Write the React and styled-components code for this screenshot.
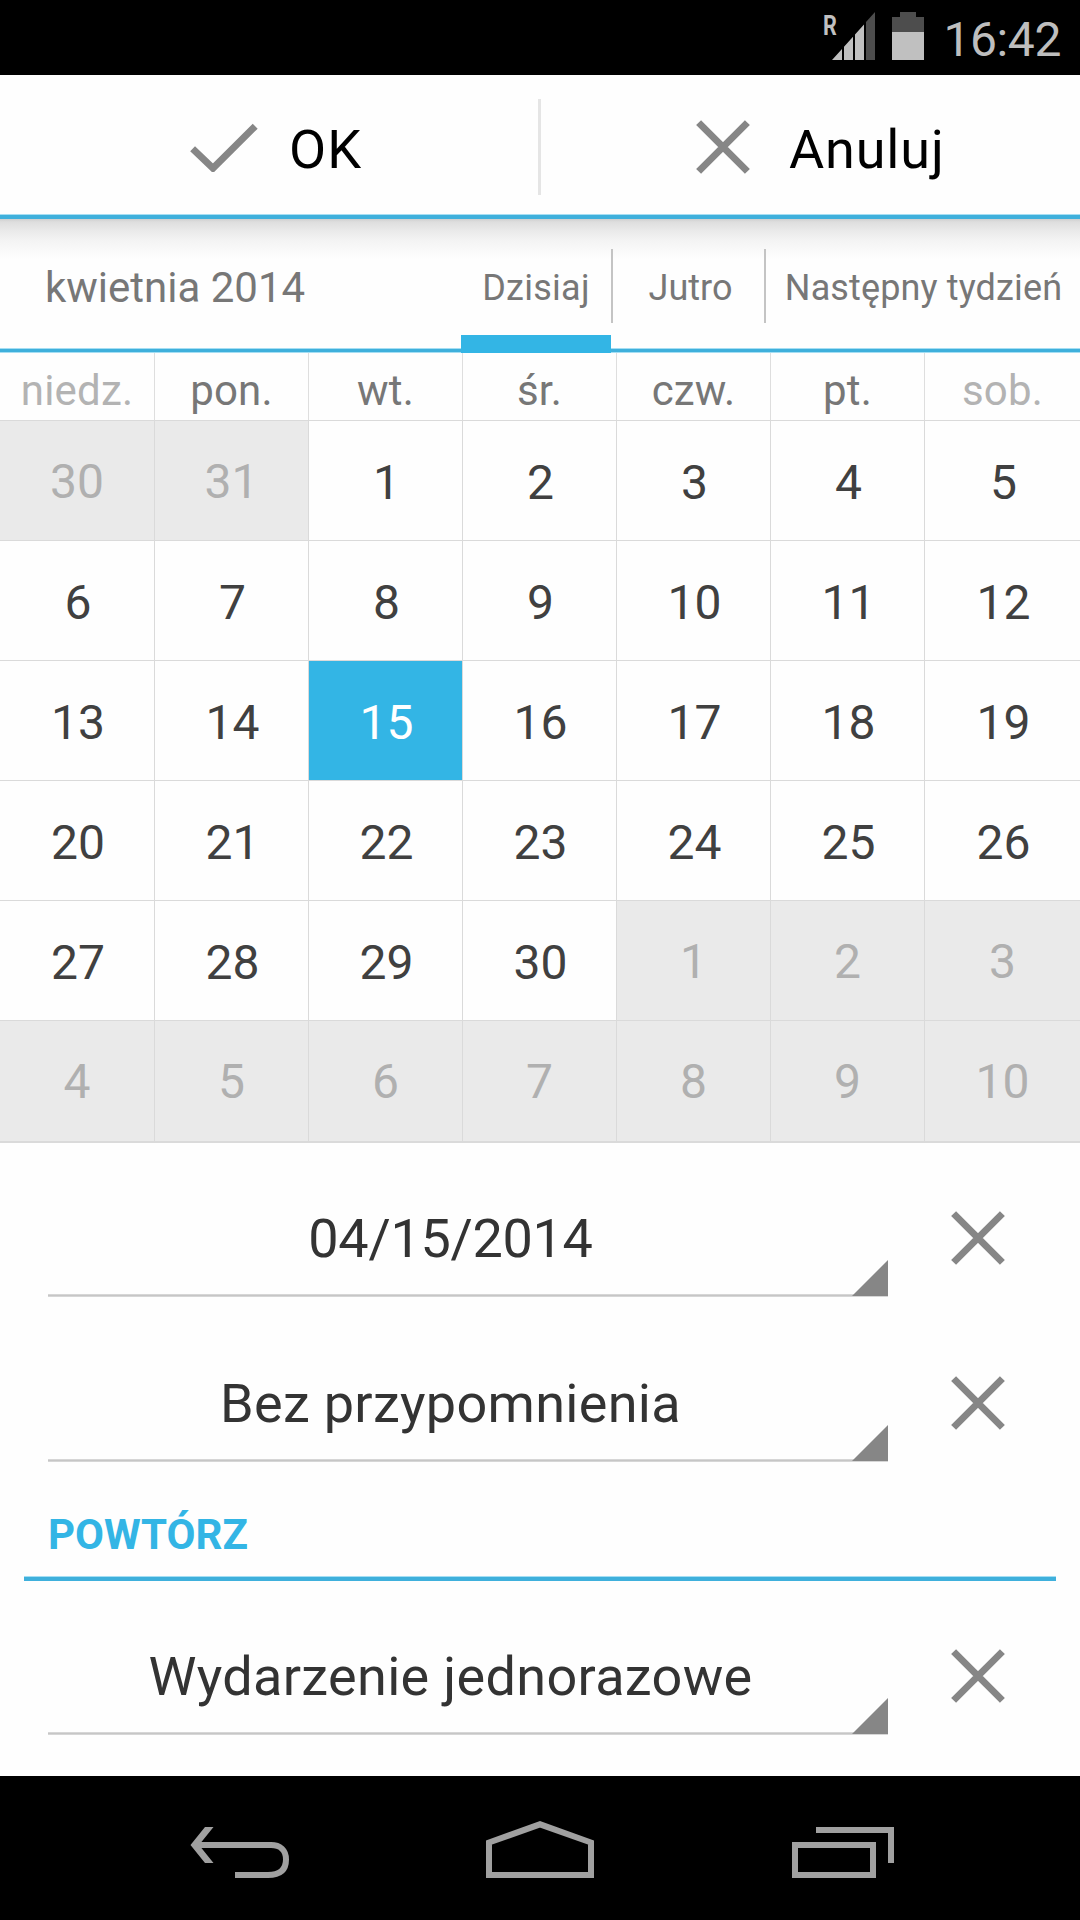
import { useState } from "react";
import styled, { createGlobalStyle } from "styled-components";

const weekdays = ["niedz.", "pon.", "wt.", "śr.", "czw.", "pt.", "sob."];

// prev month tail, april, next month head
const days = [
  ...[30, 31].map(d => ({ day: d, outside: true })),
  ...Array.from({ length: 30 }, (_, i) => ({ day: i + 1, outside: false })),
  ...Array.from({ length: 10 }, (_, i) => ({ day: i + 1, outside: true })),
];

function CloseIcon() {
  return (
    <svg width="54" height="54" viewBox="0 0 54 54">
      <path d="M2.6 2.6L51.4 51.4M51.4 2.6L2.6 51.4" stroke="#868686" strokeWidth="7" />
    </svg>
  );
}

function CheckIcon() {
  return (
    <svg width="68" height="50" viewBox="0 0 68 50">
      <path d="M2.6 26.8L23 46.2L65.2 4.2" fill="none" stroke="#868686" strokeWidth="7" />
    </svg>
  );
}

function SpinnerRow({ text, spacing }) {
  return (
    <FieldRow>
      <Spinner $spacing={spacing}>
        {text}
        <Corner />
      </Spinner>
      <ClearButton>
        <CloseIcon />
      </ClearButton>
    </FieldRow>
  );
}

export default function App() {
  const [selected, setSelected] = useState(15);

  return (
    <Screen>
      <GlobalStyle />
      <StatusBar>
        <Signal>
          <Roaming>R</Roaming>
          <svg width="43" height="48" viewBox="0 0 43 48">
            <path d="M34 9.9L43 0V48H34Z" fill="#4d4d4d" />
            <path d="M0 48L10 37V48ZM12 34.8L21 24.8V48H12ZM23 22.6L32 12.6V48H23Z" fill="#c0c0c0" />
          </svg>
        </Signal>
        <svg width="32" height="48" viewBox="0 0 32 48">
          <path d="M0 5H8V0H24V5H32V20H0Z" fill="#4d4d4d" />
          <path d="M0 20H32V48H0Z" fill="#c0c0c0" />
        </svg>
        <Clock>16:42</Clock>
      </StatusBar>

      <ActionBar>
        <ActionButton $left={190} $gap={31} $spacing="1px">
          <CheckIcon />
          <span>OK</span>
        </ActionButton>
        <ActionDivider />
        <ActionButton $left={155} $gap={39} $spacing="0.85px">
          <CloseIcon />
          <span>Anuluj</span>
        </ActionButton>
      </ActionBar>

      <Tabs>
        <Month>kwietnia 2014</Month>
        <Tab $width={150} $spacing="0.25px">
          Dzisiaj
          <Indicator />
        </Tab>
        <TabDivider />
        <Tab $width={151} $shift={4}>Jutro</Tab>
        <TabDivider />
        <Tab $width={314} $shift={1} $spacing="0.13px">Następny tydzień</Tab>
      </Tabs>

      <Calendar>
        {weekdays.map((name, i) => (
          <Weekday key={name} $weekend={i === 0 || i === 6}>
            {name}
          </Weekday>
        ))}
        {days.map(({ day, outside }, i) => (
          <Day
            key={i}
            $outside={outside}
            $selected={!outside && day === selected}
            onClick={() => !outside && setSelected(day)}
          >
            {day}
          </Day>
        ))}
      </Calendar>

      <Form>
        <SpinnerRow text="04/15/2014" spacing="-0.3px" />
        <SpinnerRow text="Bez przypomnienia" spacing="0.3px" />
        <SectionTitle>POWTÓRZ</SectionTitle>
        <SpinnerRow text="Wydarzenie jednorazowe" spacing="0.33px" />
      </Form>

      <NavBar>
        <NavButton>
          <svg width="108" height="72" viewBox="0 0 108 72">
            <path d="M6.5 33L21 15H29.5L15 33L29.5 51H21Z" fill="#a0a0a0" />
            <path d="M13 33H87C96 33 102 38 102 47.5S97 63 84 63H51" fill="none" stroke="#a0a0a0" strokeWidth="6" />
          </svg>
        </NavButton>
        <NavButton>
          <svg width="108" height="72" viewBox="0 0 108 72">
            <path d="M3 30.5L54 12.3L105 30.5V63H3Z" fill="none" stroke="#a0a0a0" strokeWidth="6" />
          </svg>
        </NavButton>
        <NavButton>
          <svg width="108" height="72" viewBox="0 0 108 72">
            <path d="M7 33H85V63H7ZM28 18H103V51" fill="none" stroke="#a0a0a0" strokeWidth="6" />
          </svg>
        </NavButton>
      </NavBar>
    </Screen>
  );
}

const GlobalStyle = createGlobalStyle`
  body {
    margin: 0;
    background: #fefefe;
    font-family: Roboto, sans-serif;
  }

  * {
    box-sizing: border-box;
  }

  svg {
    display: block;
    flex: none;
  }

  button {
    margin: 0;
    padding: 0;
    border: none;
    background: none;
    font: inherit;
    white-space: nowrap;
  }
`;

const Screen = styled.div`
  width: 1080px;
  height: 1920px;
  display: flex;
  flex-direction: column;
  overflow: hidden;

  > * {
    flex-shrink: 0;
  }
`;

// status bar
const StatusBar = styled.header`
  height: 75px;
  padding: 12px 19px 0 0;
  display: flex;
  justify-content: flex-end;
  background: #000;
`;

const Signal = styled.div`
  position: relative;
  margin-right: 17px;
`;

const Roaming = styled.span`
  position: absolute;
  left: -9px;
  top: -2px;
  font-size: 27px;
  font-weight: 700;
  line-height: 32px;
  color: #c0c0c0;
  transform: scaleX(0.8);
  transform-origin: left;
`;

const Clock = styled.div`
  margin-left: 19px;
  font-size: 48px;
  line-height: 55px;
  letter-spacing: -0.4px;
  color: #bebebe;
`;

// OK / cancel
const ActionBar = styled.div`
  height: 144px;
  display: flex;
  padding-bottom: 5px;
  background: linear-gradient(#a5def3 1px, #3fb0dc 1px) bottom / 100% 5px no-repeat #fefefe;
`;

const ActionButton = styled.button`
  width: 538px;
  display: flex;
  align-items: center;
  gap: ${p => p.$gap}px;
  && {
    padding: 5px 0 0 ${p => p.$left}px;
  }
  font-size: 54px;
  letter-spacing: ${p => p.$spacing};
  color: #000;

  span {
    padding-top: 5px;
  }
`;

const ActionDivider = styled.div`
  width: 3px;
  height: 96px;
  margin-top: 24px;
  background: #e5e5e5;
`;

// month + shortcuts
const Tabs = styled.div`
  height: 134px;
  padding: 8px 0 5px;
  display: flex;
  background:
    linear-gradient(#a5def3 1px, #3fb0dc 1px 4px, #a5def3 4px) bottom / 100% 5px no-repeat,
    linear-gradient(#cfcfcf 0, #dedede 3px, #eaeaea 12px, #f4f4f4 22px, #fefefe 40px);
`;

const Month = styled.div`
  flex: 1;
  padding-left: 45px;
  font-size: 42px;
  line-height: 121px;
  color: #777;
`;

const Tab = styled.button`
  position: relative;
  width: ${p => p.$width}px;
  && {
    padding-left: ${p => p.$shift || 0}px;
  }
  font-size: 36px;
  letter-spacing: ${p => p.$spacing || 0};
  color: #777;
`;

const Indicator = styled.i`
  position: absolute;
  left: 0;
  right: 0;
  bottom: -5px;
  height: 18px;
  background: #33b5e5;
`;

const TabDivider = styled.div`
  width: 2px;
  height: 74px;
  margin-top: 22px;
  background: #c4c4c4;
`;

// calendar
const Calendar = styled.div`
  height: 790px;
  display: grid;
  grid-template-columns: repeat(6, 154px) 156px;
  grid-template-rows: 67px repeat(5, 120px) 121px;
  border-bottom: 2px solid #dadada;
`;

const Weekday = styled.div`
  padding-top: 8px;
  display: flex;
  align-items: center;
  justify-content: center;
  border-left: 1px solid #dedede;
  font-size: 42px;
  letter-spacing: 0.2px;
  color: ${p => (p.$weekend ? "#b3b3b3" : "#777")};

  &:first-child {
    border-left: none;
  }
`;

const Day = styled.button`
  display: flex;
  align-items: center;
  justify-content: center;
  font-size: 48px;
  && {
    padding: ${p => (p.$outside ? "1px 0 0" : "4px 0 0 2px")};
    border-top: 1px solid #dadada;
    border-left: 1px solid #dadada;
    background: ${p => (p.$selected ? "#33b5e5" : p.$outside ? "#eaeaea" : "#fefefe")};
  }
  color: ${p => (p.$selected ? "#fff" : p.$outside ? "#b0b0b0" : "#404040")};

  &&:nth-child(7n + 1) {
    border-left: none;
  }
`;

// fields
const Form = styled.div`
  height: 633px;
  padding-top: 38px;
`;

const FieldRow = styled.div`
  height: 116px;
  margin-bottom: 49px;
  padding-left: 48px;
  display: flex;
`;

const Spinner = styled.div`
  position: relative;
  width: 840px;
  padding-right: 35px;
  background: linear-gradient(#d6d6d6 1px, #c6c6c6 1px 2px, #d6d6d6 2px) bottom / 100% 3px no-repeat;
  font-size: 54px;
  line-height: 116px;
  letter-spacing: ${p => p.$spacing};
  text-align: center;
  color: #333;
`;

const Corner = styled.i`
  position: absolute;
  right: 0;
  bottom: 1px;
  width: 36px;
  height: 36px;
  background: #868686;
  clip-path: polygon(100% 0, 100% 100%, 0 100%);
`;

const ClearButton = styled.button`
  display: flex;
  align-items: center;
  && {
    padding: 0 0 2px 63px;
  }
`;

const SectionTitle = styled.h2`
  height: 88px;
  margin: -18px 24px 38px;
  padding-left: 24px;
  background: linear-gradient(#a5def3 1px, #3fb0dc 1px) bottom / 100% 5px no-repeat;
  font-size: 42px;
  font-weight: 700;
  line-height: 83px;
  color: #33b5e5;
`;

// system navigation
const NavBar = styled.nav`
  height: 144px;
  display: flex;
  justify-content: center;
  background: #000;
`;

const NavButton = styled.button`
  width: 302px;
  display: flex;
  align-items: center;
  justify-content: center;
`;
